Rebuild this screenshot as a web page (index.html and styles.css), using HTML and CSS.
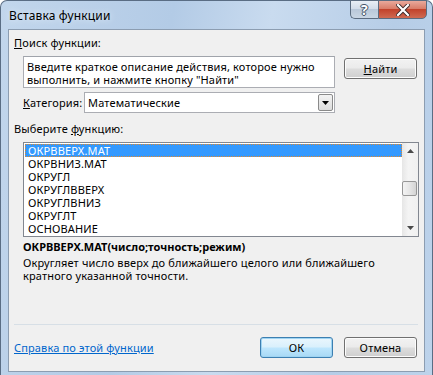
FILE: index.html
```html
<!DOCTYPE html>
<html lang="ru">
<head>
    <meta charset="UTF-8">
    <title>Вставка функции</title>
    <link rel="stylesheet" href="styles.css">
</head>
<body>
    <div class="window">
        <div class="titlebar">
            <span class="title">Вставка функции</span>
            <div class="caption-buttons">
                <div class="cap-help">?</div>
                <div class="cap-close">
                    <svg width="14" height="12" viewBox="0 0 14 12">
                        <path d="M2 1 L12 11 M12 1 L2 11" stroke="#3b2a2a" stroke-width="4" stroke-linecap="square"/>
                        <path d="M2 1 L12 11 M12 1 L2 11" stroke="#ffffff" stroke-width="2.2" stroke-linecap="square"/>
                    </svg>
                </div>
            </div>
        </div>
        <div class="client">
            <div class="label"><u>П</u>оиск функции:</div>
            <div class="search-row">
                <div class="textbox">Введите краткое описание действия, которое нужно<br>выполнить, и нажмите кнопку "Найти"</div>
                <div class="button find-btn"><u>Н</u>айти</div>
            </div>
            <div class="category-row">
                <span class="cat-label"><u>К</u>атегория:</span>
                <div class="select">
                    <span>Математические</span>
                    <div class="drop-btn">
                        <svg width="7" height="4" viewBox="0 0 7 4"><path d="M0 0 H7 L3.5 4 Z" fill="#000"/></svg>
                    </div>
                </div>
            </div>
            <div class="label list-label">Выберите <u>ф</u>ункцию:</div>
            <div class="listbox">
                <ul class="items">
                    <li class="selected">ОКРВВЕРХ.МАТ</li>
                    <li>ОКРВНИЗ.МАТ</li>
                    <li>ОКРУГЛ</li>
                    <li>ОКРУГЛВВЕРХ</li>
                    <li>ОКРУГЛВНИЗ</li>
                    <li>ОКРУГЛТ</li>
                    <li>ОСНОВАНИЕ</li>
                </ul>
                <div class="scrollbar">
                    <svg class="arrow" width="7" height="4" viewBox="0 0 7 4"><path d="M3.5 0 L7 4 H0 Z" fill="#4a4a4a"/></svg>
                    <div class="track"><div class="thumb"></div></div>
                    <svg class="arrow" width="7" height="4" viewBox="0 0 7 4"><path d="M0 0 H7 L3.5 4 Z" fill="#4a4a4a"/></svg>
                </div>
            </div>
            <div class="signature">ОКРВВЕРХ.МАТ(число;точность;режим)</div>
            <div class="description">Округляет число вверх до ближайшего целого или ближайшего<br>кратного указанной точности.</div>
            <div class="footer">
                <div class="separator"></div>
                <div class="footer-row">
                    <a class="help-link" href="#">Справка по этой функции</a>
                    <div class="buttons">
                        <div class="button default-btn">ОК</div>
                        <div class="button">Отмена</div>
                    </div>
                </div>
            </div>
        </div>
    </div>
</body>
</html>
```

FILE: styles.css
```css
body {
    margin: 0;
    padding: 0;
    background-color: #ffffff;
    font-family: "Noto Sans", "Open Sans", sans-serif;
    font-size: 11px;
    letter-spacing: 0.15px;
    color: #000;
}

.window {
    width: 433px;
    height: 375px;
    box-sizing: border-box;
    border: 1px solid #5a6d84;
    border-bottom: none;
    border-radius: 7px 7px 0 0;
    background: linear-gradient(100deg, #c2d6ec 0%, #b3cbe6 35%, #c9dbef 55%, #b6cde7 80%, #bdd3eb 100%);
    padding: 0 7px 3px;
    display: flex;
    flex-direction: column;
}

/* title bar */
.titlebar {
    height: 28px;
    display: flex;
    justify-content: space-between;
    align-items: flex-start;
}

.title {
    font-size: 12px;
    padding: 6px 0 0 1px;
    color: #000;
    text-shadow: 0 0 6px #e8f1fa;
}

.caption-buttons {
    display: flex;
    margin: -1px -2px 0 0;
}

.cap-help,
.cap-close {
    height: 19px;
    box-sizing: border-box;
    border: 1px solid #5b6c80;
    display: flex;
    align-items: center;
    justify-content: center;
}

.cap-help {
    width: 28px;
    border-right: none;
    border-radius: 0 0 0 5px;
    background: linear-gradient(#e8eef5 0%, #d3dde9 45%, #b9c8d9 50%, #c9d6e4 100%);
    color: #ffffff;
    font-weight: bold;
    font-size: 14px;
    text-shadow: 0 0 1px #2d3b4c, 1px 0 0 #4a5a6e, -1px 0 0 #4a5a6e, 0 1px 0 #4a5a6e, 0 -1px 0 #4a5a6e;
}

.cap-close {
    width: 49px;
    border-radius: 0 0 5px 0;
    background: linear-gradient(#e9a99b 0%, #d97d69 45%, #c2432c 50%, #cf6a52 100%);
}

/* client area */
.client {
    flex: 1;
    border: 1px solid #8c9db1;
    background-color: #f0f0f0;
    padding: 5px 7px 13px 5px;
    display: flex;
    flex-direction: column;
}

.label {
    line-height: 15px;
}

.search-row {
    display: flex;
    margin: 6px 0 0 9px;
}

.textbox {
    width: 312px;
    height: 32px;
    box-sizing: border-box;
    border: 1px solid #abadb3;
    border-top-color: #a0a4ab;
    background-color: #fff;
    padding: 3px 3px;
    line-height: 13px;
}

.button {
    width: 73px;
    height: 21px;
    box-sizing: border-box;
    border: 1px solid #707070;
    border-radius: 3px;
    background: linear-gradient(#f2f2f2 0%, #ebebeb 48%, #dddddd 52%, #cfcfcf 100%);
    box-shadow: inset 0 0 0 1px #fcfcfc;
    display: flex;
    align-items: center;
    justify-content: center;
}

.find-btn {
    margin: 2px 0 0 9px;
}

.category-row {
    display: flex;
    align-items: center;
    margin: 4px 0 0 9px;
}

.cat-label {
    width: 61px;
}

.select {
    width: 251px;
    height: 21px;
    box-sizing: border-box;
    border: 1px solid #abadb3;
    background-color: #fff;
    display: flex;
    align-items: center;
    justify-content: space-between;
    padding: 0 1px 0 3px;
}

.drop-btn {
    width: 15px;
    height: 17px;
    box-sizing: border-box;
    border: 1px solid #8a8a8a;
    border-radius: 2px;
    background: linear-gradient(#f3f3f3, #dcdcdc);
    display: flex;
    align-items: center;
    justify-content: center;
}

.list-label {
    margin-top: 8px;
}

.listbox {
    width: 396px;
    height: 95px;
    box-sizing: border-box;
    margin: 6px -1px 0 9px;
    border: 1px solid #828790;
    background-color: #fff;
    display: flex;
}

.items {
    list-style: none;
    margin: 0;
    padding: 1px 0 0 1px;
    flex: 1;
}

.items li {
    height: 13px;
    line-height: 13px;
    padding-left: 3px;
    box-sizing: border-box;
}

.items li.selected {
    background-color: #3399ff;
    color: #fff;
    border: 1px dotted #e0882d;
    line-height: 11px;
    padding-left: 2px;
}

.scrollbar {
    width: 16px;
    background: linear-gradient(90deg, #e6e6e6, #f4f4f4 40%, #f0f0f0);
    display: flex;
    flex-direction: column;
    align-items: center;
}

.scrollbar .arrow {
    margin: 6px 0;
}

.track {
    flex: 1;
    width: 100%;
    display: flex;
    align-items: center;
}

.thumb {
    width: 15px;
    height: 15px;
    box-sizing: border-box;
    border: 1px solid #979797;
    border-radius: 2px;
    background: linear-gradient(90deg, #f3f3f3, #e6e6e6 50%, #d4d4d4);
    margin-bottom: 2px;
}

.signature {
    font-weight: bold;
    letter-spacing: 0;
    line-height: 13px;
    margin: 3px 0 0 9px;
}

.description {
    line-height: 13px;
    margin: 3px 0 0 9px;
}

/* bottom part */
.footer {
    margin-top: auto;
}

.separator {
    height: 1px;
    background-color: #d7dfe6;
    margin-right: -1px;
}

.footer-row {
    display: flex;
    align-items: center;
    justify-content: space-between;
    margin-top: 12px;
}

.help-link {
    color: #0066cc;
    text-decoration: underline;
}

.buttons {
    display: flex;
    gap: 11px;
}

.default-btn {
    border-color: #3c7fb1;
    box-shadow: inset 0 0 0 1px #9fd4f2;
    background: linear-gradient(#eaf6fd 0%, #d9f0fc 48%, #bee6fd 52%, #a7d9f5 100%);
}
```
